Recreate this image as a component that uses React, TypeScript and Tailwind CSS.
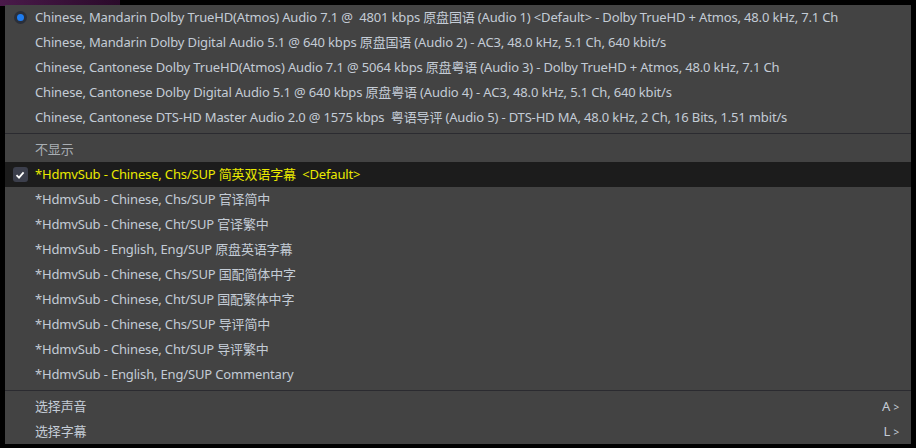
import React from "react";

const audio = [
  "Chinese, Mandarin Dolby TrueHD(Atmos) Audio 7.1 @  4801 kbps 原盘国语 (Audio 1) <Default> - Dolby TrueHD + Atmos, 48.0 kHz, 7.1 Ch",
  "Chinese, Mandarin Dolby Digital Audio 5.1 @ 640 kbps 原盘国语 (Audio 2) - AC3, 48.0 kHz, 5.1 Ch, 640 kbit/s",
  "Chinese, Cantonese Dolby TrueHD(Atmos) Audio 7.1 @ 5064 kbps 原盘粤语 (Audio 3) - Dolby TrueHD + Atmos, 48.0 kHz, 7.1 Ch",
  "Chinese, Cantonese Dolby Digital Audio 5.1 @ 640 kbps 原盘粤语 (Audio 4) - AC3, 48.0 kHz, 5.1 Ch, 640 kbit/s",
  "Chinese, Cantonese DTS-HD Master Audio 2.0 @ 1575 kbps  粤语导评 (Audio 5) - DTS-HD MA, 48.0 kHz, 2 Ch, 16 Bits, 1.51 mbit/s",
];

const subs = [
  "*HdmvSub - Chinese, Chs/SUP 官译简中",
  "*HdmvSub - Chinese, Cht/SUP 官译繁中",
  "*HdmvSub - English, Eng/SUP 原盘英语字幕",
  "*HdmvSub - Chinese, Chs/SUP 国配简体中字",
  "*HdmvSub - Chinese, Cht/SUP 国配繁体中字",
  "*HdmvSub - Chinese, Chs/SUP 导评简中",
  "*HdmvSub - Chinese, Cht/SUP 导评繁中",
  "*HdmvSub - English, Eng/SUP Commentary",
];

function Row({ children, icon, active, right, dim }: { children: React.ReactNode; icon?: React.ReactNode; active?: boolean; right?: string; dim?: boolean }) {
  return (
    <div className={`flex h-[25px] items-center whitespace-pre ${active ? "bg-[#1c1c1c] text-[#eaea00]" : dim ? "text-[#a9aeb3]" : "text-[#c4ccd6]"}`}>
      <div className="flex w-[30px] shrink-0 items-center justify-center">{icon}</div>
      <div className="flex-1">{children}</div>
      {right && <div className="pr-[12px] text-[#c4ccd6]">{right} <span className="text-[10px]">&gt;</span></div>}
    </div>
  );
}

function Separator() {
  return (
    <div className="flex h-[7px] items-center">
      <div className="h-px w-full bg-[#2b2b30]" />
    </div>
  );
}

export default function App() {
  return (
    <div className="relative h-[448px] w-[916px] overflow-hidden bg-black p-[5px] text-[13px] tracking-[-0.16px]" style={{ fontFamily: '"Noto Sans", "Noto Sans CJK SC", sans-serif' }}>
      <div className="absolute left-0 top-0 h-[6px] w-[120px] bg-gradient-to-r from-[#4a1a4a] to-[#2a0a2a]" />
      <div className="relative h-[439px] w-[906px] bg-[#434343] pb-px">
        {audio.map((a, i) => (
          <Row
            key={a}
            icon={i === 0 ? <span className="block h-[13px] w-[13px] rounded-full border-[3px] border-[#2a2f3a] bg-[#1e7cf0]" /> : undefined}
          >
            {a}
          </Row>
        ))}
        <Separator />
        <Row dim>不显示</Row>
        <Row
          active
          icon={
            <span className="flex h-[15px] w-[15px] items-center justify-center rounded-[3px] bg-[#3c3f4c]">
              <svg width="10" height="10" viewBox="0 0 10 10">
                <path d="M1.5 5.2 L4 7.6 L8.6 2.4" fill="none" stroke="#fff" strokeWidth="1.8" />
              </svg>
            </span>
          }
        >
          {"*HdmvSub - Chinese, Chs/SUP 简英双语字幕  <Default>"}
        </Row>
        {subs.map((s) => (
          <Row key={s}>{s}</Row>
        ))}
        <Separator />
        <Row right="A">选择声音</Row>
        <Row right="L">选择字幕</Row>
      </div>
    </div>
  );
}
